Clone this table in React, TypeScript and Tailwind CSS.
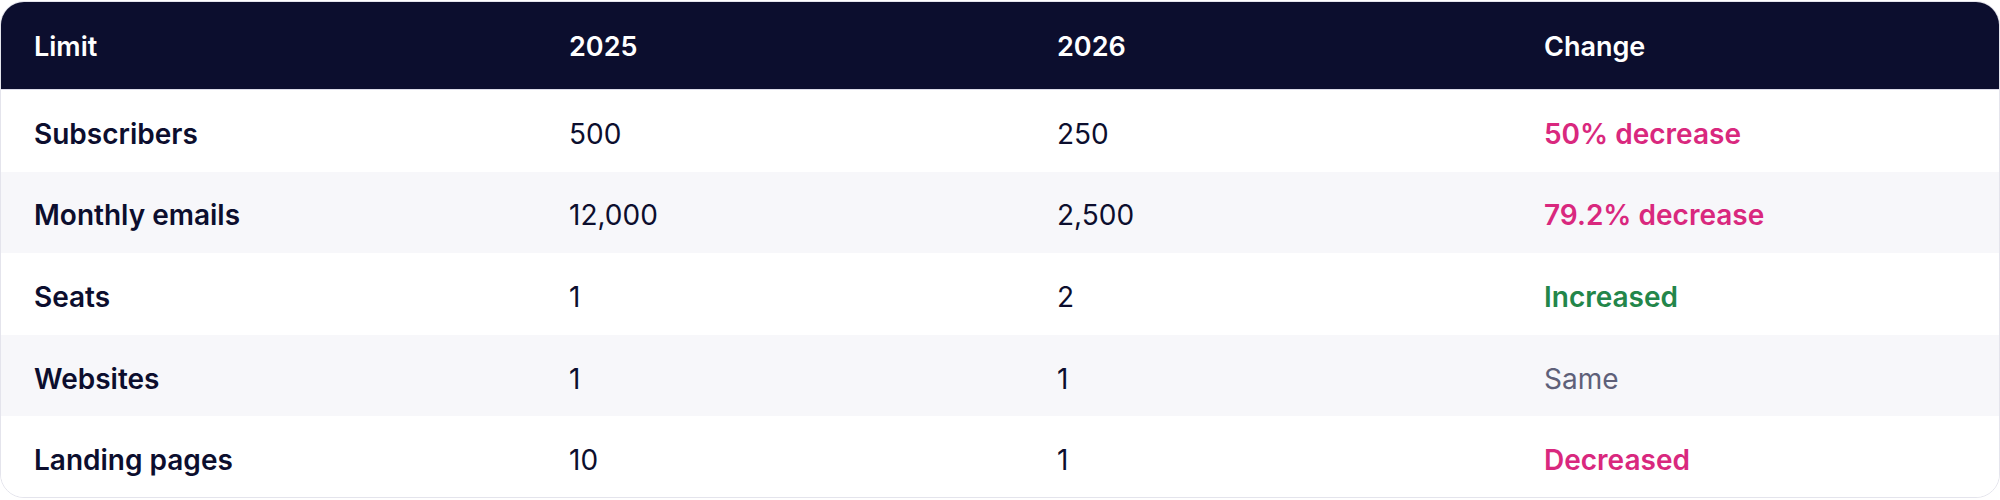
const rows = [
  { limit: 'Subscribers', y2025: '500', y2026: '250', change: '50% decrease', tone: 'down' },
  { limit: 'Monthly emails', y2025: '12,000', y2026: '2,500', change: '79.2% decrease', tone: 'down' },
  { limit: 'Seats', y2025: '1', y2026: '2', change: 'Increased', tone: 'up' },
  { limit: 'Websites', y2025: '1', y2026: '1', change: 'Same', tone: 'same' },
  { limit: 'Landing pages', y2025: '10', y2026: '1', change: 'Decreased', tone: 'down' },
];

const toneClass: Record<string, string> = {
  down: 'font-semibold text-[#d9287e]',
  up: 'font-semibold text-[#23864a]',
  same: 'font-normal text-[#5e6079]',
};

const cols = 'grid grid-cols-[535px_488px_487px_1fr] items-center';

export default function App() {
  return (
    <div className="h-[500px] w-[2000px] bg-white pt-px font-['Inter',sans-serif] text-[28px] text-[#0c0e2e]">
      <div className="box-border h-[497px] w-[2000px] overflow-hidden rounded-[24px] border border-[#e4e4ec]">
        <div className={`${cols} h-[88px] border-b border-[#dcdce8] bg-[#0c0e2e] pt-[4px] text-[27px] font-semibold text-white`}>
          <div className="pl-[33px]">Limit</div>
          <div className="pl-[33px]">2025</div>
          <div className="pl-[33px]">2026</div>
          <div className="pl-[33px]">Change</div>
        </div>
        {rows.map((r, i) => (
          <div
            key={r.limit}
            className={`${cols} h-[81.6px] pt-[6px] ${i % 2 === 1 ? 'bg-[#f7f7fa]' : 'bg-white'}`}
          >
            <div className="pl-[33px] font-semibold">{r.limit}</div>
            <div className="pl-[33px]">{r.y2025}</div>
            <div className="pl-[33px]">{r.y2026}</div>
            <div className={`pl-[33px] ${toneClass[r.tone]}`}>{r.change}</div>
          </div>
        ))}
      </div>
    </div>
  );
}
